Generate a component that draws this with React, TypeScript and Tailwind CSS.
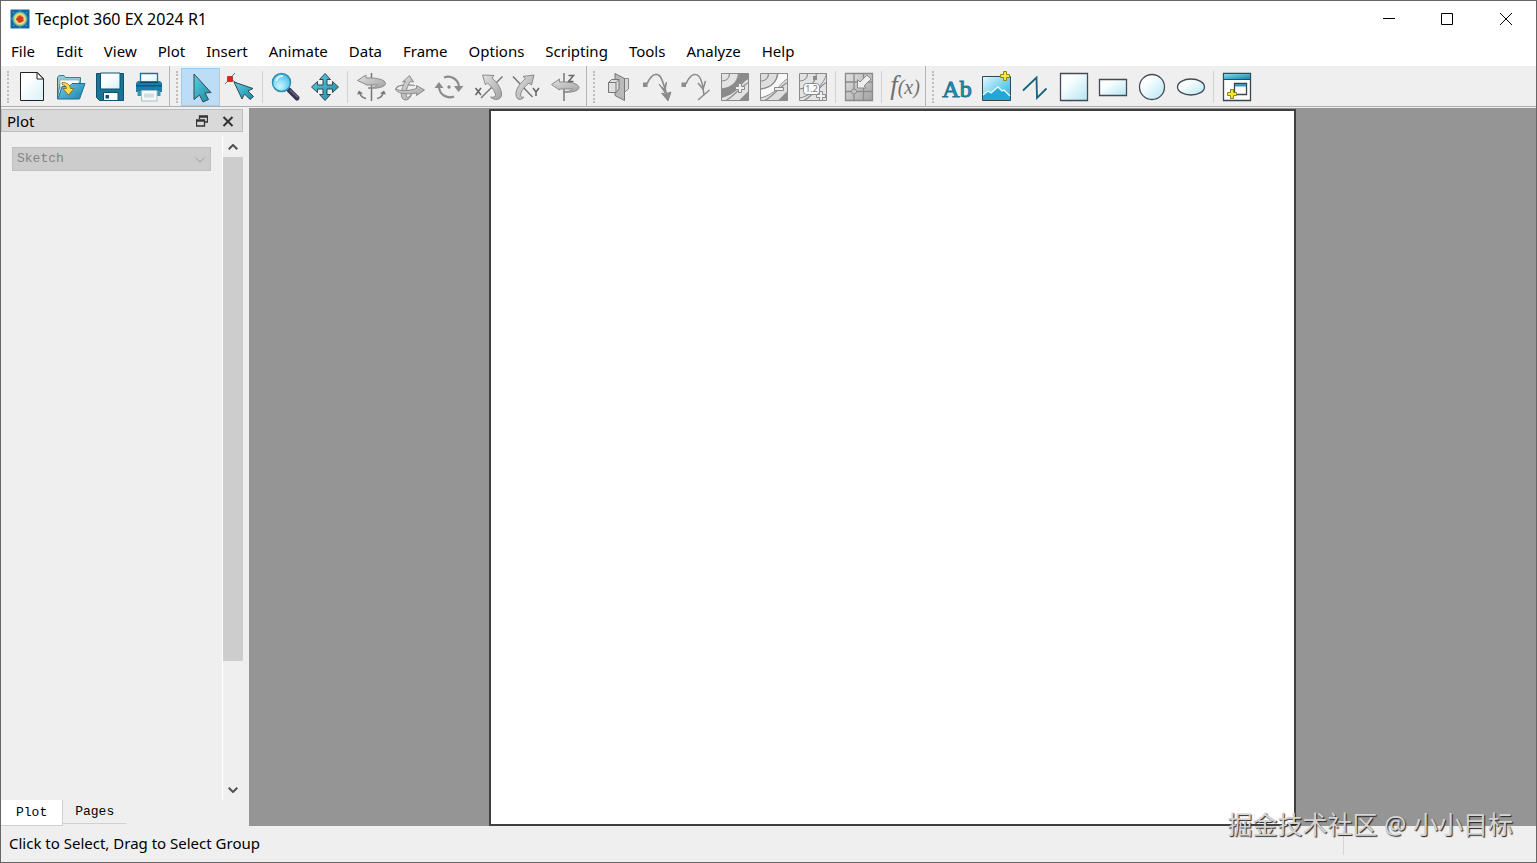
import type { ReactNode } from "react";

const MENUS = [
  "File",
  "Edit",
  "View",
  "Plot",
  "Insert",
  "Animate",
  "Data",
  "Frame",
  "Options",
  "Scripting",
  "Tools",
  "Analyze",
  "Help",
];

interface Tool {
  id: string;
  label: string;
  icon: ReactNode;
  active?: boolean;
  disabled?: boolean;
}

const EDGE = "#33474f";
const GREY = "#8b8b8b";

function Plus({ x, y, fill, stroke }: { x: number; y: number; fill: string; stroke: string }) {
  return (
    <path
      transform={`translate(${x} ${y})`}
      d="M-1.5-4.5h3v3h3v3h-3v3h-3v-3h-3v-3h3z"
      fill={fill}
      stroke={stroke}
      strokeWidth="1"
    />
  );
}

const FILE_TOOLS: Tool[][] = [
  [
    {
      id: "new",
      label: "New Layout",
      icon: (
        <>
          <path d="M4.5 1.5h17l6 6v22h-23z" fill="url(#paper)" stroke="#222" />
          <path d="M21 1.5v6.5h6.5z" fill="#fff" stroke="#222" />
        </>
      ),
    },
    {
      id: "open",
      label: "Open Layout",
      icon: (
        <>
          <path d="M2.5 6.5l1.5-2h5l1.5 2h15v5h-20l-3 14z" fill="#8fcbd6" stroke="#3c7f8e" />
          <path d="M5 9h19v8H5z" fill="#fff" stroke="#7fa6b0" strokeWidth="0.7" />
          <path d="M2.5 7v21h22l5.5-15.5H17l-3 3H7l-3.5 11" fill="url(#folder)" stroke="#1d6e92" />
          <path
            d="M7 11.5c5 0 8 2 8.5 6h3.5L13.5 24 8 17.5h3.5c0-2-1.5-3.5-4.5-4z"
            fill="#ffdf4d"
            stroke="#7a6414"
            strokeWidth="0.8"
          />
        </>
      ),
    },
    {
      id: "save",
      label: "Save Layout",
      icon: (
        <>
          <path d="M2.5 2.5h27v27h-24l-3-3z" fill="#187597" stroke="#13506a" />
          <path d="M6.5 2h19.5v16h-19.5z" fill="url(#paper)" stroke="#13506a" />
          <path d="M9.5 21.5h14.5v8h-14.5z" fill="#fff" stroke="#13506a" />
          <path d="M11.5 24h3.5v3.5h-3.5z" fill="#13506a" />
        </>
      ),
    },
    {
      id: "print",
      label: "Print",
      icon: (
        <>
          <path d="M7.5 2.5h17v9h-17z" fill="url(#paper)" stroke="#187597" strokeWidth="1.3" />
          <path d="M3 12l2-2h22l2 2v9H3z" fill="#187fa8" />
          <path d="M3 14h26v1.500H3z" fill="#0d587a" />
          <path d="M4.5 20h23v5h-23z" fill="#3f93b3" />
          <path d="M8.500 19.500h15.500v10.500H8.500z" fill="#f4fafb" stroke="#a5bdc5" />
          <path d="M11 22.500h10v4H11z" fill="#d3dddd" />
          <path d="M7 11.500h18" stroke="#0d4862" />
        </>
      ),
    },
  ],
];

const VIEW_TOOLS: Tool[][] = [
  [
    {
      id: "select",
      label: "Select",
      active: true,
      icon: (
        <path
          d="M9 3v25.5l5.5-4.5 3.5 7 5.5-2.5-3.5-6.5 6-.5z"
          fill="url(#teal)"
          stroke={EDGE}
        />
      ),
    },
    {
      id: "adjust",
      label: "Adjust",
      icon: (
        <>
          <path d="M1 13L11 2M6 7.500l10 7" stroke="#70706a" />
          <path d="M3.500 5.500h5v5h-5z" fill="#f01b12" stroke="#8d2820" strokeWidth="0.7" />
          <path
            d="M10 11l8 17 2.500-5 5.500 5.500 3.500-3-5.500-5.500 5-2.500z"
            fill="url(#teal)"
            stroke={EDGE}
          />
        </>
      ),
    },
  ],
  [
    {
      id: "zoom",
      label: "Zoom",
      icon: (
        <>
          <path d="M19 19l8 8" stroke="#36344f" strokeWidth="5" strokeLinecap="round" />
          <path d="M20 19l8 7.500" stroke="#66658b" strokeWidth="1.5" />
          <circle cx="11.500" cy="11.500" r="9" fill="url(#lens)" stroke="#2e8eb5" strokeWidth="1.5" />
          <path d="M6 10c1-4 4-5 7-5" stroke="#fff" strokeWidth="2" fill="none" opacity=".7" />
        </>
      ),
    },
    {
      id: "translate",
      label: "Translate",
      icon: (
        <path
          d="M16 2.500l5.500 6H18v5.500h5.500v-3.500l6 5.500-6 5.500V18H18v5.500h3.500l-5.500 6-5.500-6H14V18H8.500v3.500l-6-5.500 6-5.500V14H14V8.500h-3.500z"
          fill="url(#teal)"
          stroke={EDGE}
        />
      ),
    },
  ],
  [
    {
      id: "spherical",
      label: "Spherical Rotation",
      disabled: true,
      icon: (
        <>
          <path d="M16.500 2v28" stroke="#777" strokeWidth="1.5" />
          <path
            d="M2.500 9.500L11 4v3c12-.5 19.500 2 19.500 5.500S22 18 13 17c6-.5 9-1.500 10-3H11v-.5z"
            fill="url(#metal)"
            stroke={GREY}
          />
          <path d="M11 27.500c-3-.5-5-2-6-5M22 27.500c3-.5 5-2 6-5" fill="none" stroke="#777" strokeWidth="1.5" />
          <path d="M2 23.500l2-4 4 3zM31 23.500l-2-4-4 3z" fill="#777" />
        </>
      ),
    },
    {
      id: "rollerball",
      label: "Rollerball Rotation",
      disabled: true,
      icon: (
        <>
          <path d="M2 18c1-4 10-5 19-3.500" fill="none" stroke={GREY} strokeWidth="1.2" />
          <path
            d="M15.500 4.500l4 6.500-3-.5c-4 5-5 12-4 15 1 2 4 0 5.500-4-1 5-4 8-7 7.500-5-1-5-10 .5-19L8.500 11z"
            fill="url(#metal)"
            stroke={GREY}
          />
          <path
            d="M30.500 19l-8 5.500V22C12 24 2 22 1.500 18c4 2 12 2.500 21-.5v-3z"
            fill="url(#metal)"
            stroke={GREY}
          />
        </>
      ),
    },
    {
      id: "twist",
      label: "Twist Rotation",
      disabled: true,
      icon: (
        <>
          <path
            d="M11 6.500a11 11 0 0 1 15 9M21 25.500a11 11 0 0 1-15-9"
            fill="none"
            stroke={GREY}
            strokeWidth="2.2"
          />
          <path d="M21 15h9.500l-5 6zM1.500 17l4.500-6 4.500 6z" fill={GREY} />
          <circle cx="16" cy="16" r="1.700" fill={GREY} />
        </>
      ),
    },
    {
      id: "rotate-x",
      label: "X-Axis Rotation",
      disabled: true,
      icon: (
        <>
          <path d="M30.500 5.500L9 27" stroke="#777" strokeWidth="1.5" />
          <path
            d="M10.500 4L22 4.500 20 7c6 5 10 12 9.500 17-.5 5-7 6-11 2 4 1 6-1 4.500-4-1-3-4-7-7.500-10l-2 2z"
            fill="url(#metal)"
            stroke={GREY}
          />
          <path d="M3.500 17l5.500 7M9 17l-5.500 7" stroke="#666" strokeWidth="1.6" />
        </>
      ),
    },
    {
      id: "rotate-y",
      label: "Y-Axis Rotation",
      disabled: true,
      icon: (
        <>
          <path d="M2 5.500L21.500 26" stroke="#777" strokeWidth="1.5" />
          <path
            d="M23 4l-11 1.500 2.500 2C8 13 4.500 19 5 24c.5 5 5 6 8 2-3 1-4-1-3-4s4-7 8-10l2.500 2z"
            fill="url(#metal)"
            stroke={GREY}
          />
          <path d="M22 17l3 4 3-4M25 21v4" stroke="#666" strokeWidth="1.6" fill="none" />
        </>
      ),
    },
    {
      id: "rotate-z",
      label: "Z-Axis Rotation",
      disabled: true,
      icon: (
        <>
          <path d="M14 2v28" stroke="#777" strokeWidth="1.5" />
          <path
            d="M1.500 13.500L9.500 8v3c12-.5 19.500 2 19.500 5.500S21 22 13 21c6-.5 9-1.500 10-3H9.500v1z"
            fill="url(#metal)"
            stroke={GREY}
          />
          <path d="M18.500 4.500h5l-5 6h5" stroke="#666" strokeWidth="1.5" fill="none" />
        </>
      ),
    },
  ],
];

const contourLines = (
  <path
    d="M2.500 10c5 0 8-3 8-7.500M2.500 18c9-1 16-6 17-15.500M7 29.500c7-4 8-7 15-12 3-3 5-5 7.500-6"
    fill="none"
    stroke={GREY}
    strokeWidth="1.2"
  />
);

const PROBE_TOOLS: Tool[][] = [
  [
    {
      id: "slice",
      label: "Slice",
      disabled: true,
      icon: (
        <>
          <path d="M16 9.500l3-2h7.500V18l-4 3H16z" fill="#d5d5d5" stroke={GREY} />
          <path d="M13 2.500l9.500 5v22l-9.500-5z" fill="#b9b9b9" stroke="#777" />
          <path d="M6.500 11.500l3-3H17v9.500l-3 3.500H6.500z" fill="#dedede" stroke="#777" />
          <path d="M6.500 11.500H14v10M14 11.500l3-3" fill="none" stroke="#777" />
        </>
      ),
    },
    {
      id: "streamtrace",
      label: "Add Streamtrace",
      disabled: true,
      icon: (
        <>
          <path d="M6 13C11 1 18 1 21 9c2 5 3 9 5 15" fill="none" stroke={GREY} strokeWidth="1.7" />
          <path d="M2 11.500h4.500V16H2z" fill={GREY} />
          <path d="M18 13l5 5 2.500-7-1.500 11zM20.500 22l4 1 5.500-2-3 9z" fill={GREY} stroke={GREY} />
        </>
      ),
    },
    {
      id: "terminate",
      label: "Streamtrace Termination Line",
      disabled: true,
      icon: (
        <>
          <path
            d="M6 13C11 1 18 1 21 9c2 5 2 9 3 15M18 29L29.500 19"
            fill="none"
            stroke={GREY}
            strokeWidth="1.5"
          />
          <path d="M1.500 11.500H6V16H1.500z" fill={GREY} />
          <path d="M18 12l5 6 2.500-8" fill="none" stroke={GREY} strokeWidth="1.6" />
        </>
      ),
    },
    {
      id: "contour-add",
      label: "Add Contour Level",
      disabled: true,
      icon: (
        <>
          <path d="M2.500 2.500h27v27h-27z" fill="#e3e3e3" stroke={GREY} />
          <path d="M2.500 18C12 17 19 11 20 2.500h9.500V8C22 11 21 22 2.500 27z" fill={GREY} />
          {contourLines}
          <path d="M29.500 20v9.500H20z" fill={GREY} />
          <Plus x={21} y={17} fill="#eee" stroke={GREY} />
        </>
      ),
    },
    {
      id: "contour-delete",
      label: "Delete Contour Level",
      disabled: true,
      icon: (
        <>
          <path d="M2.500 2.500h27v27h-27z" fill="#dedede" stroke={GREY} />
          <path
            d="M2.500 18C12 17 19 11 20 2.500h9.500V8C22 11 21 22 2.500 27z"
            fill="#f8f8f8"
            stroke={GREY}
          />
          {contourLines}
          <path d="M29.500 20v9.500H20z" fill={GREY} />
          <path d="M16.500 16.500h9v3h-9z" fill="#eee" stroke={GREY} />
        </>
      ),
    },
    {
      id: "contour-label",
      label: "Add Contour Label",
      disabled: true,
      icon: (
        <>
          <path d="M2.500 2.500h27v27h-27z" fill="#e3e3e3" stroke={GREY} />
          <path d="M2.500 27C14 25 28 13 29.500 2.500" fill="none" stroke={GREY} />
          {contourLines}
          <path d="M16 5h4v4h-4z" fill={GREY} />
          <rect x="6.500" y="12.500" width="16" height="11" rx="3" fill="#fafafa" stroke={GREY} />
          <text x="14.500" y="21" fontSize="9" textAnchor="middle" fill="#777">
            1.2
          </text>
          <Plus x={24} y={25} fill="#eee" stroke={GREY} />
        </>
      ),
    },
  ],
  [
    {
      id: "extract",
      label: "Probe",
      disabled: true,
      icon: (
        <>
          <path d="M2.500 2.500h27v27h-27z" fill="url(#metal)" stroke={GREY} strokeWidth="1.3" />
          <path d="M11 2.500v27M20.500 2.500v27M2.500 11h27M2.500 20.500h27" stroke={GREY} strokeWidth="1.3" />
          <path d="M14.500 17V8.500l2.500 2.500 7-7 4 4-7 7 2.500 2z" fill="#eee" stroke={GREY} />
          <circle cx="11" cy="20.500" r="2.500" fill="#c6c6c6" stroke={GREY} />
        </>
      ),
    },
  ],
  [
    {
      id: "function",
      label: "Specify Equations",
      disabled: true,
      icon: (
        <text
          x="16"
          y="23"
          textAnchor="middle"
          fontStyle="italic"
          fontFamily="Liberation Serif, serif"
          fill="#707070"
        >
          <tspan fontSize="27">f</tspan>
          <tspan fontSize="20">(x)</tspan>
        </text>
      ),
    },
  ],
];

const DRAW_TOOLS: Tool[][] = [
  [
    {
      id: "text",
      label: "Text",
      icon: (
        <text
          x="16"
          y="26"
          textAnchor="middle"
          fontSize="24"
          fontFamily="Liberation Serif, serif"
          fill="#2298ba"
          stroke="#1d7594"
          strokeWidth="1"
        >
          Ab
        </text>
      ),
    },
    {
      id: "image",
      label: "Image",
      icon: (
        <>
          <path d="M2.500 5.500h28v24h-28z" fill="url(#sky)" stroke={EDGE} />
          <path d="M3 24l5-4 3 2 7-6 4 4 2-1 6 6v4H3z" fill="#23a7d9" />
          <path d="M3 24l5-4 3 2 7-6 4 4 2-1 6 6" fill="none" stroke="#f2fcff" strokeWidth="1.3" />
          <Plus x={25} y={5} fill="#f5e933" stroke="#8b8520" />
        </>
      ),
    },
    {
      id: "polyline",
      label: "Polyline",
      icon: (
        <path
          d="M4 19.500L17.500 6.500l.5 20.500 9.500-9.500"
          fill="none"
          stroke="#17627e"
          strokeWidth="1.8"
        />
      ),
    },
    {
      id: "square",
      label: "Square",
      icon: <path d="M2.500 2.500h27v27h-27z" fill="url(#shape)" stroke="#434a55" strokeWidth="1.3" />,
    },
    {
      id: "rectangle",
      label: "Rectangle",
      icon: <path d="M2.500 8.500h27v16h-27z" fill="url(#shape)" stroke="#434a55" strokeWidth="1.3" />,
    },
    {
      id: "circle",
      label: "Circle",
      icon: <circle cx="16" cy="16" r="12.500" fill="url(#shape)" stroke="#434a55" strokeWidth="1.3" />,
    },
    {
      id: "ellipse",
      label: "Ellipse",
      icon: (
        <ellipse
          cx="16"
          cy="16"
          rx="13.500"
          ry="8"
          fill="url(#shape)"
          stroke="#434a55"
          strokeWidth="1.3"
        />
      ),
    },
  ],
  [
    {
      id: "frame",
      label: "Create Frame",
      icon: (
        <>
          <path d="M2.500 2.500h27v27h-27z" fill="#fbfdfe" stroke="#3b4750" strokeWidth="1.3" />
          <path d="M3 3h26v5H3z" fill="url(#folder)" />
          <path d="M2.500 8.500h27" stroke="#3b4750" />
          <path d="M13.500 12.500h12v11h-12z" fill="#fff" stroke="#3b4750" strokeWidth="1.3" />
          <path d="M14 13h11v2.500H14z" fill="#3399c4" />
          <Plus x={11} y={23} fill="#f5e933" stroke="#8b8520" />
        </>
      ),
    },
  ],
];

function Gradients() {
  return (
    <svg className="absolute size-0" aria-hidden="true">
      <defs>
        <linearGradient id="paper" x1="0" y1="0" x2="1" y2="1">
          <stop offset="0.3" stopColor="#fff" />
          <stop offset="1" stopColor="#d6f0f8" />
        </linearGradient>
        <linearGradient id="shape" x1="0" y1="0" x2="1" y2="1">
          <stop offset="0.3" stopColor="#fbfeff" />
          <stop offset="1" stopColor="#b4e6f4" />
        </linearGradient>
        <linearGradient id="folder" x1="0" y1="0" x2="1" y2="1">
          <stop offset="0" stopColor="#8ad9f0" />
          <stop offset="1" stopColor="#1581ad" />
        </linearGradient>
        <linearGradient id="sky" x1="0" y1="0" x2="1" y2="1">
          <stop offset="0" stopColor="#e5f9ff" />
          <stop offset="0.6" stopColor="#68cdec" />
          <stop offset="1" stopColor="#2caedb" />
        </linearGradient>
        <linearGradient id="teal" x1="0" y1="0" x2="1" y2="1">
          <stop offset="0" stopColor="#5fd0df" />
          <stop offset="1" stopColor="#1689a8" />
        </linearGradient>
        <linearGradient id="metal" x1="0" y1="0" x2="1" y2="1">
          <stop offset="0" stopColor="#e2e2e2" />
          <stop offset="1" stopColor="#a2a2a2" />
        </linearGradient>
        <radialGradient id="lens" cx="0.4" cy="0.7" r="0.8">
          <stop offset="0" stopColor="#c8f8ff" />
          <stop offset="1" stopColor="#39b5e4" />
        </radialGradient>
        <radialGradient id="burst">
          <stop offset="0" stopColor="#c8301c" />
          <stop offset="0.35" stopColor="#e8642a" />
          <stop offset="0.55" stopColor="#f7e08a" />
          <stop offset="0.75" stopColor="#9ed28c" />
          <stop offset="1" stopColor="#1568a6" />
        </radialGradient>
      </defs>
    </svg>
  );
}

function ToolGroup({ sections, last }: { sections: Tool[][]; last?: boolean }) {
  return (
    <div
      role="toolbar"
      className={`flex items-center pt-0.5 ${last ? "" : "border-r border-[#b5b5b5] pr-px"}`}
    >
      <div className="mr-[3px] ml-1.5 h-8 w-0.5 border-l-2 border-dotted border-[#bdbdbd]" />
      {sections.map((tools, i) => (
        <div key={tools[0].id} className="flex items-center">
          {i > 0 && <div className="mx-[3px] h-8 w-px bg-[#d2d2d2]" />}
          {tools.map((t) => (
            <button
              key={t.id}
              type="button"
              aria-label={t.label}
              title={t.label}
              disabled={t.disabled}
              className={`flex h-[38px] w-[39px] items-center justify-center border ${
                t.active ? "border-[#9ccdf5] bg-[#bddcf5]" : "border-transparent"
              }`}
            >
              <svg viewBox="0 0 32 32" className="size-8" fill="none">
                {t.icon}
              </svg>
            </button>
          ))}
        </div>
      ))}
    </div>
  );
}

function Chevron({ up, className }: { up?: boolean; className: string }) {
  return (
    <svg viewBox="0 0 10 6" className={className} fill="none" stroke="currentColor">
      <path d={up ? "M.7 5.200L5 1l4.300 4.200" : "M.7.800L5 5 9.300.800"} />
    </svg>
  );
}

function TitleBar() {
  return (
    <header className="flex h-[37px] shrink-0 items-center bg-white pb-px pl-[9px]">
      <svg viewBox="0 0 20 20" className="mr-[5px] size-5">
        <path d="M.5.500h19v19H.5z" fill="#1568a6" />
        <path d="M3 3l3 3M17 3l-3 3M3 17l3-3M17 17l-3-3M10 1v3M10 19v-3M1 10h3" stroke="#45b9cd" />
        <circle cx="10" cy="10" r="8" fill="url(#burst)" />
        <path d="M10 6l1 2.500 2.500-.5-1 2.500 1.500 1.500-3 1-2 1-1-2.500-2.500-1 2.500-2z" fill="#cc3a1d" />
      </svg>
      <h1 className="flex-1 text-base leading-5">Tecplot 360 EX 2024 R1</h1>
      <div className="flex h-full">
        <button type="button" aria-label="Minimize" className="flex w-[58px] items-center justify-center">
          <svg viewBox="0 0 12 12" className="size-3" stroke="#000">
            <path d="M0 5.500h12" />
          </svg>
        </button>
        <button type="button" aria-label="Maximize" className="flex w-[58px] items-center justify-center">
          <svg viewBox="0 0 12 12" className="size-3" stroke="#000" fill="none">
            <path d="M.5.500h11v11H.5z" />
          </svg>
        </button>
        <button type="button" aria-label="Close" className="flex w-[60px] items-center justify-center">
          <svg viewBox="0 0 12 12" className="size-3" stroke="#000">
            <path d="M0 0l12 12M12 0L0 12" />
          </svg>
        </button>
      </div>
    </header>
  );
}

function PlotSidebar() {
  return (
    <aside className="flex w-[248px] shrink-0 flex-col pr-1.5">
      <div className="mt-px flex h-[23px] items-center border border-[#bdbdbd] bg-[#d9d9d9] pr-2 pl-[5px]">
        <h2 className="flex-1">Plot</h2>
        <button type="button" aria-label="Float panel" className="mr-3.5">
          <svg viewBox="0 0 12 12" className="size-3" fill="none" stroke="#333">
            <path d="M3.500 4V1h8v6H8.500M3.500 2h8" strokeWidth="1.3" />
            <path d="M.5 5h8v6h-8zM.5 6h8" strokeWidth="1.3" />
          </svg>
        </button>
        <button type="button" aria-label="Close panel">
          <svg viewBox="0 0 12 12" className="size-3" stroke="#333" strokeWidth="2">
            <path d="M1.500 2l9 9M10.500 2l-9 9" />
          </svg>
        </button>
      </div>

      <div className="mt-1 flex min-h-0 flex-1">
        <div className="flex-1 pt-[11px] pr-[11px] pl-[11px]">
          <div className="relative">
            <select
              aria-label="Plot type"
              disabled
              className="block h-6 w-full appearance-none border border-[#bfbfbf] bg-[#cccccc] pl-1 font-['Liberation_Mono',monospace] text-[13px] text-[#858585] opacity-100"
            >
              <option>Sketch</option>
            </select>
            <Chevron className="pointer-events-none absolute top-2.5 right-1.5 h-1.5 w-2.5 text-[#9c9c9c]" />
          </div>
        </div>
        <div className="flex w-[21px] flex-col border-l border-white">
          <button type="button" aria-label="Scroll up" className="flex h-[21px] items-center justify-center">
            <Chevron up className="h-1.5 w-2.5 stroke-2 text-[#505050]" />
          </button>
          <div className="flex-1">
            <div className="h-[81%] bg-[#cdcdcd]" />
          </div>
          <button type="button" aria-label="Scroll down" className="flex h-[21px] items-center justify-center">
            <Chevron className="h-1.5 w-2.5 stroke-2 text-[#505050]" />
          </button>
        </div>
      </div>

      <div role="tablist" className="flex items-start font-['Liberation_Mono',monospace] text-[13px]">
        <button
          type="button"
          role="tab"
          aria-selected="true"
          className="h-[26px] border-r border-b border-[#d0d0d0] bg-white px-[15px]"
        >
          Plot
        </button>
        <button type="button" role="tab" aria-selected="false" className="h-6 border-b border-[#d0d0d0] px-3">
          Pages
        </button>
      </div>
    </aside>
  );
}

export default function App() {
  return (
    <div className="relative flex h-screen flex-col border border-[#666] bg-[#efefef] font-['Noto_Sans','Noto_Sans_CJK_SC',sans-serif] text-[15px] leading-5 text-black">
      <Gradients />
      <TitleBar />
      <nav className="flex h-7 shrink-0 items-center gap-px bg-white pb-0.5">
        {MENUS.map((name) => (
          <button key={name} type="button" className="px-2.5">
            {name}
          </button>
        ))}
      </nav>
      <div className="flex h-[41px] shrink-0 border-b border-[#b0b0b0]">
        <ToolGroup sections={FILE_TOOLS} />
        <ToolGroup sections={VIEW_TOOLS} />
        <ToolGroup sections={PROBE_TOOLS} />
        <ToolGroup sections={DRAW_TOOLS} last />
      </div>

      <div className="flex min-h-0 flex-1 pt-px">
        <PlotSidebar />
        <main className="flex min-w-0 flex-1 justify-center bg-[#959595] pt-px">
          <div className="aspect-[807/717] h-full border-2 border-[#404040] bg-white" />
        </main>
      </div>

      <footer className="flex h-9 shrink-0 items-center justify-between pb-0.5 pl-2">
        <span>Click to Select, Drag to Select Group</span>
        <div className="mr-48 h-6 w-px bg-[#d6d6d6]" />
      </footer>

      <div className="absolute right-[23px] bottom-5 text-[25px] leading-9 text-[#d4d4d4] [text-shadow:1px_1px_1px_#222]">
        掘金技术社区 @ 小小目标
      </div>
    </div>
  );
}
